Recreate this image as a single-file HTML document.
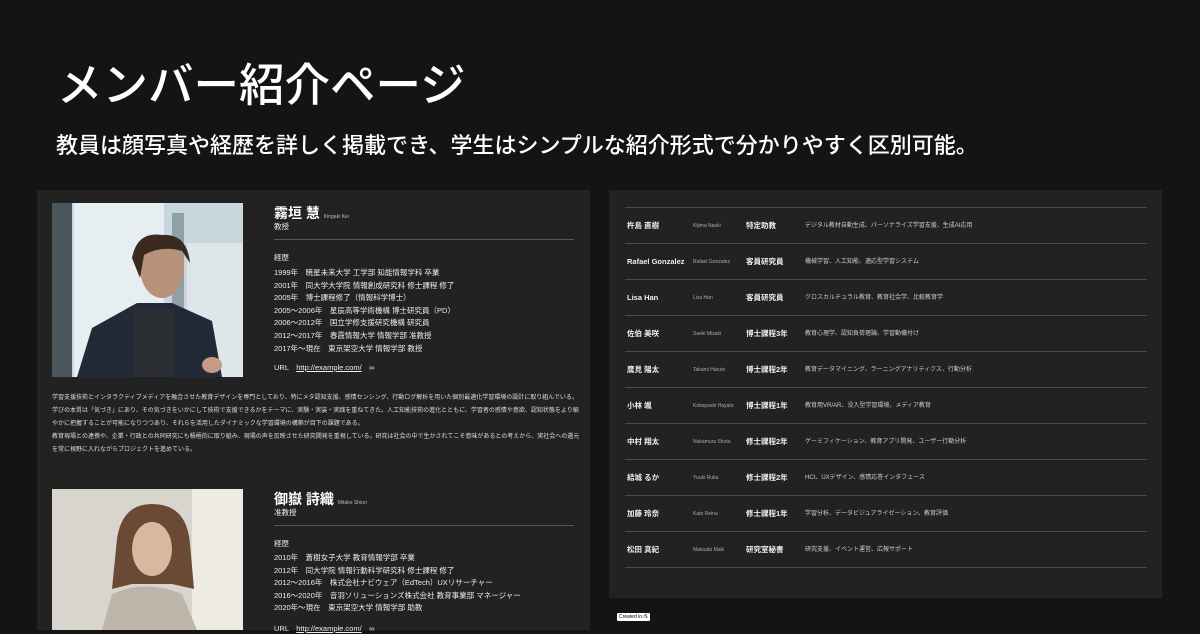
<!DOCTYPE html>
<html><head><meta charset="utf-8"><style>
*{margin:0;padding:0;box-sizing:border-box}
body{width:1200px;height:630px;overflow:hidden;background:#141414;color:#fff;font-family:"Liberation Sans","Noto Sans CJK JP",sans-serif;position:relative}
.a{position:absolute;white-space:nowrap}
h1{position:absolute;left:57px;top:49px;font-size:45.5px;font-weight:500;letter-spacing:0}
.sub{position:absolute;left:56px;top:128px;font-size:22px;font-weight:500}
.panel{position:absolute;background:#222}
.nm{font-size:14px;font-weight:700}
.rm{font-size:5px;color:#bbb}
.sm{font-size:7.5px;color:#eee}
.hr{position:absolute;height:1px;background:#555}
.par{position:absolute;left:52px;top:392px;font-size:6px;line-height:13px;color:#ddd;white-space:nowrap}
.row{position:absolute;left:625px;width:522px;height:36px;border-bottom:1px solid #4a4a4a}
.row span{position:absolute;top:13px;line-height:10px;font-size:7px;color:#eee}
.row .n{left:2px;font-size:7.5px;font-weight:700}
.row .r{left:68px;font-size:5px;color:#aaa}
.row .p{left:121px;font-size:7.5px;font-weight:700}
.row .d{left:180px;font-size:6px;color:#ccc}
</style></head><body>
<h1>メンバー紹介ページ</h1>
<div class="sub">教員は顔写真や経歴を詳しく掲載でき、学生はシンプルな紹介形式で分かりやすく区別可能。</div>

<div class="panel" style="left:37px;top:190px;width:553px;height:440px"></div>
<svg class="a" style="left:52px;top:203px" width="191" height="174">
<rect width="191" height="174" fill="#c9d6dc"/><rect x="0" width="20" height="174" fill="#4a555c"/><rect x="22" width="90" height="174" fill="#e6eef2"/><rect x="120" y="10" width="12" height="164" fill="#8fa0a8"/><rect x="135" y="40" width="56" height="134" fill="#dfe6ea"/>
<path d="M25 174 L40 125 L85 100 L120 100 L160 118 L170 174Z" fill="#222a38"/>
<rect x="82" y="105" width="40" height="69" fill="#2a2e33"/>
<ellipse cx="110" cy="65" rx="22" ry="30" fill="#b8917a"/>
<path d="M80 55 Q85 28 110 32 Q135 30 138 60 L130 48 Q110 42 92 52 L88 75Z" fill="#3a2a20"/>
<ellipse cx="160" cy="162" rx="10" ry="8" fill="#c49c86"/>
</svg>
<div class="a nm" style="left:274px;top:203px">霧垣 慧 <span class="rm" style="font-weight:400">Kirigaki Kei</span></div>
<div class="a sm" style="left:274px;top:221px">教授</div>
<div class="hr" style="left:274px;top:239px;width:300px"></div>
<div class="a sm" style="left:274px;top:252px">経歴</div>
<div class="a sm" style="left:274px;top:267px;line-height:12.6px">1999年　暁星未来大学 工学部 知能情報学科 卒業<br>2001年　同大学大学院 情報創成研究科 修士課程 修了<br>2005年　博士課程修了（情報科学博士）<br>2005〜2006年　星辰高等学術機構 博士研究員（PD）<br>2006〜2012年　国立学修支援研究機構 研究員<br>2012〜2017年　春霞情報大学 情報学部 准教授<br>2017年〜現在　東京架空大学 情報学部 教授</div>
<div class="a sm" style="left:274px;top:362px">URL　<u>http://example.com/</u>　∞</div>
<div class="par">学習支援技術とインタラクティブメディアを融合させた教育デザインを専門としており、特にメタ認知支援、感情センシング、行動ログ解析を用いた個別最適化学習環境の設計に取り組んでいる。<br>学びの本質は「気づき」にあり、その気づきをいかにして技術で支援できるかをテーマに、実験・実装・実践を重ねてきた。人工知能技術の進化とともに、学習者の感情や意欲、認知状態をより細<br>やかに把握することが可能になりつつあり、それらを活用したダイナミックな学習環境の構築が目下の課題である。<br>教育現場との連携や、企業・行政との共同研究にも積極的に取り組み、現場の声を反映させた研究開発を重視している。研究は社会の中で生かされてこそ意味があるとの考えから、実社会への還元<br>を常に視野に入れながらプロジェクトを進めている。</div>

<svg class="a" style="left:52px;top:489px" width="191" height="141">
<rect width="191" height="141" fill="#d8d4ce"/><rect x="140" width="51" height="141" fill="#eeeae4"/>
<path d="M50 141 L60 105 Q95 90 130 105 L145 141Z" fill="#bdb5aa"/>
<path d="M65 50 Q70 15 100 15 Q135 15 138 55 L142 100 L120 95 L80 95 L60 100Z" fill="#6a4a35"/>
<ellipse cx="100" cy="60" rx="20" ry="27" fill="#d9b8a0"/>
</svg>
<div class="a nm" style="left:274px;top:489px">御嶽 詩織 <span class="rm" style="font-weight:400">Mitake Shiori</span></div>
<div class="a sm" style="left:274px;top:507px">准教授</div>
<div class="hr" style="left:274px;top:525px;width:300px"></div>
<div class="a sm" style="left:274px;top:538px">経歴</div>
<div class="a sm" style="left:274px;top:552px;line-height:12.6px">2010年　蒼樹女子大学 教育情報学部 卒業<br>2012年　同大学院 情報行動科学研究科 修士課程 修了<br>2012〜2016年　株式会社ナビウェア（EdTech）UXリサーチャー<br>2016〜2020年　音羽ソリューションズ株式会社 教育事業部 マネージャー<br>2020年〜現在　東京架空大学 情報学部 助教</div>
<div class="a sm" style="left:274px;top:623px">URL　<u>http://example.com/</u>　∞</div>

<div class="panel" style="left:609px;top:190px;width:553px;height:408px"></div>
<div class="hr" style="left:625px;top:207px;width:522px;background:#4a4a4a"></div>
<div class="row" style="top:208px"><span class="n">杵島 直樹</span><span class="r">Kijima Naoki</span><span class="p">特定助教</span><span class="d">デジタル教材自動生成、パーソナライズ学習支援、生成AI応用</span></div>
<div class="row" style="top:244px"><span class="n">Rafael Gonzalez</span><span class="r">Rafael Gonzalez</span><span class="p">客員研究員</span><span class="d">機械学習、人工知能、適応型学習システム</span></div>
<div class="row" style="top:280px"><span class="n">Lisa Han</span><span class="r">Lisa Han</span><span class="p">客員研究員</span><span class="d">クロスカルチュラル教育、教育社会学、比較教育学</span></div>
<div class="row" style="top:316px"><span class="n">佐伯 美咲</span><span class="r">Saeki Misaki</span><span class="p">博士課程3年</span><span class="d">教育心理学、認知負荷理論、学習動機付け</span></div>
<div class="row" style="top:352px"><span class="n">鷹見 陽太</span><span class="r">Takami Haruto</span><span class="p">博士課程2年</span><span class="d">教育データマイニング、ラーニングアナリティクス、行動分析</span></div>
<div class="row" style="top:388px"><span class="n">小林 颯</span><span class="r">Kobayashi Hayato</span><span class="p">博士課程1年</span><span class="d">教育用VR/AR、没入型学習環境、メディア教育</span></div>
<div class="row" style="top:424px"><span class="n">中村 翔太</span><span class="r">Nakamura Shota</span><span class="p">修士課程2年</span><span class="d">ゲーミフィケーション、教育アプリ開発、ユーザー行動分析</span></div>
<div class="row" style="top:460px"><span class="n">結城 るか</span><span class="r">Yuuki Ruka</span><span class="p">修士課程2年</span><span class="d">HCI、UXデザイン、感情応答インタフェース</span></div>
<div class="row" style="top:496px"><span class="n">加藤 玲奈</span><span class="r">Kato Reina</span><span class="p">修士課程1年</span><span class="d">学習分析、データビジュアライゼーション、教育評価</span></div>
<div class="row" style="top:532px"><span class="n">松田 真紀</span><span class="r">Matsuda Maki</span><span class="p">研究室秘書</span><span class="d">研究支援、イベント運営、広報サポート</span></div>
<div class="a" style="left:617px;top:613px;background:#fff;color:#000;font-size:5px;padding:1px 2px;border-radius:1px">Created in ∕S</div>
</body></html>
